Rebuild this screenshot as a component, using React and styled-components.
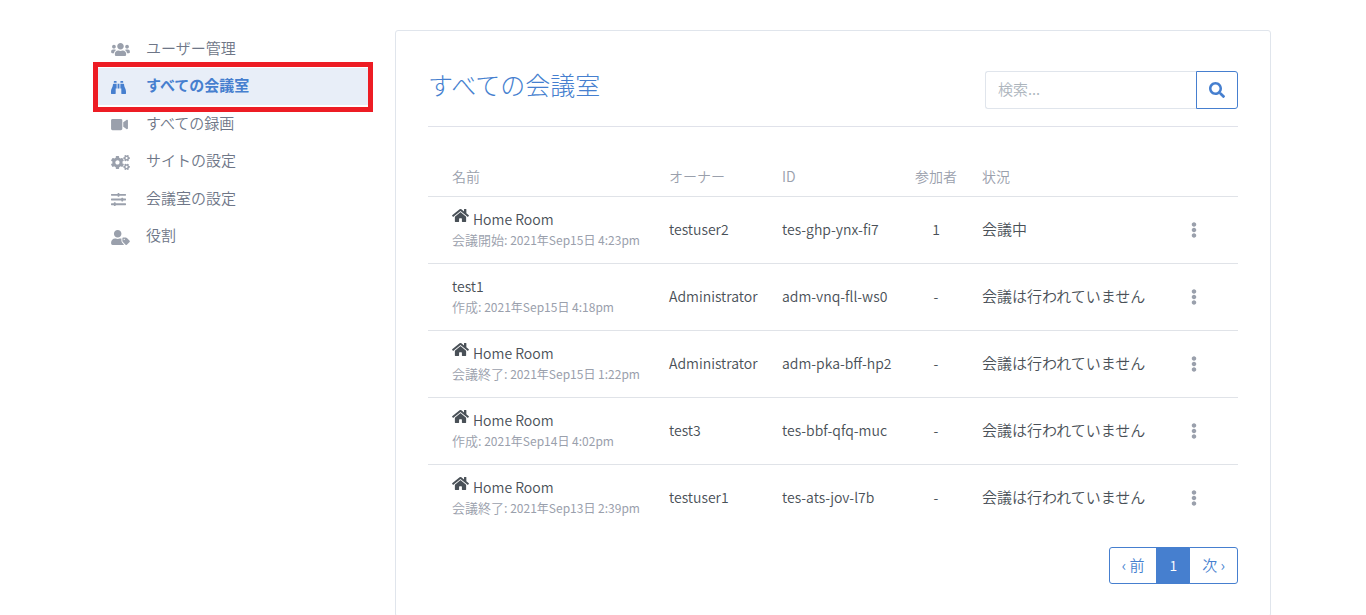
import React from 'react'
import styled, { createGlobalStyle } from 'styled-components';
import {
    FaUsers,
    FaBinoculars,
    FaVideo,
    FaCogs,
    FaSlidersH,
    FaUserTag,
    FaHome,
    FaSearch,
    FaEllipsisV
} from 'react-icons/fa';

const GlobalStyle = createGlobalStyle`
    * {
        box-sizing: border-box;
    }

    body {
        margin: 0;
        background: #fff;
        color: #495057;
        font-family: "Noto Sans CJK JP", "Noto Sans", sans-serif;
        font-size: 15px;
        font-weight: 350;
        line-height: 24px;
    }
`;

const Container = styled.div`
    display: grid;
    grid-template-columns: minmax(0, 1fr) minmax(0, 3fr);
    max-width: 1200px;
    margin: 0 auto;
    padding-top: 30px;
`;

const Sidebar = styled.nav`
    padding: 0 12px;
`;

const MenuList = styled.ul`
    display: grid;
    grid-auto-rows: 1fr;
    height: 225px;
    margin: 0;
    padding: 0;
    list-style: none;
`;

const MenuItem = styled.li`
    display: flex;
    position: relative;

    ${({ $active }) => $active && `
        &::after {
            content: "";
            position: absolute;
            inset: -6px -2px -7px;
            border: 5px solid #ed1c24;
            pointer-events: none;
        }
    `}
`;

const MenuLink = styled.a`
    flex: 1;
    display: flex;
    align-items: center;
    padding: 0 16px 2px;
    color: ${({ $active }) => ($active ? '#467fcf' : '#6e7687')};
    background: ${({ $active }) => ($active ? '#e8eef8' : 'transparent')};
    font-weight: ${({ $active }) => ($active ? 700 : 350)};
    text-decoration: none;
`;

const MenuIcon = styled.span`
    display: flex;
    width: 35px;
    padding-top: 4px;
    color: ${({ $active }) => ($active ? '#467fcf' : '#9aa0ac')};

    svg {
        width: ${({ $width }) => $width}px;
        height: 15px;
    }
`;

const Content = styled.main`
    padding: 0 12px;
`;

const Card = styled.section`
    padding: 32px;
    border: 1px solid #e0e5ec;
    border-radius: 3px;
`;

const CardHeader = styled.header`
    display: flex;
    justify-content: space-between;
    padding: 8px 0 17px;
    border-bottom: 1px solid #e0e2ea;
`;

const Title = styled.h1`
    margin: 0;
    color: #467fcf;
    font-size: 25px;
    font-weight: 300;
    line-height: 26px;
`;

const SearchForm = styled.form`
    display: flex;
    width: 253px;
    height: 38px;
`;

const SearchInput = styled.input`
    flex: 1;
    min-width: 0;
    padding: 0 12px 2px;
    border: 1px solid #e0e5ec;
    border-right: 0;
    border-radius: 3px 0 0 3px;
    color: #495057;
    font: inherit;

    &::placeholder {
        color: #adb5bd;
        opacity: 1;
    }
`;

const SearchButton = styled.button`
    display: flex;
    align-items: center;
    justify-content: center;
    width: 42px;
    padding: 0;
    border: 1px solid #467fcf;
    border-radius: 0 3px 3px 0;
    background: #fff;
    color: #467fcf;
    font-size: 16px;
    cursor: pointer;
`;

const Table = styled.table`
    width: 100%;
    margin-top: 29px;
    border-collapse: collapse;
    table-layout: fixed;
`;

const Col = styled.col`
    width: ${({ $width }) => $width};
`;

const HeadCell = styled.th`
    height: 40px;
    padding: 0 12px;
    color: #9aa0ac;
    font-size: 14px;
    font-weight: 350;
    text-align: ${({ $align }) => $align || 'left'};
    white-space: nowrap;

    &:first-child {
        padding-left: 24px;
    }
`;

const Row = styled.tr`
    border-top: 1px solid #e0e3e8;
`;

const Cell = styled.td`
    height: 67px;
    padding: 0 12px 1px;
    font-size: ${({ $status }) => ($status ? '15px' : '14px')};
    text-align: ${({ $align }) => $align || 'left'};
    white-space: nowrap;

    &:first-child {
        padding-left: 24px;
    }
`;

const RoomName = styled.div`
    display: flex;
    gap: 4px;
    line-height: 22px;

    svg {
        width: 17px;
        height: 15px;
    }
`;

const RoomInfo = styled.div`
    color: #9aa0ac;
    font-size: 12px;
    font-weight: 400;
    line-height: 20px;
`;

const InfoLabel = styled.span`
    font-size: 13px;
    font-weight: 350;
`;

const MenuButton = styled.button`
    display: inline-flex;
    padding: 4px;
    border: 0;
    background: none;
    color: #9aa0ac;
    font-size: 16px;
    vertical-align: middle;
    cursor: pointer;
`;

const Pagination = styled.nav`
    display: flex;
    justify-content: flex-end;
    margin-top: 16px;
`;

const PageLink = styled.a`
    display: flex;
    align-items: center;
    justify-content: center;
    height: 37px;
    padding: 0 12px 2px;
    border: 1px solid #467fcf;
    color: ${({ $current }) => ($current ? '#fff' : '#467fcf')};
    background: ${({ $current }) => ($current ? '#467fcf' : '#fff')};
    font-size: ${({ $current }) => ($current ? '14px' : '15px')};
    text-decoration: none;

    & + & {
        margin-left: -1px;
    }

    &:first-child {
        border-radius: 3px 0 0 3px;
    }

    &:last-child {
        border-radius: 0 3px 3px 0;
    }
`;

const menu = [
    { label: 'ユーザー管理', icon: FaUsers, width: 19 },
    { label: 'すべての会議室', icon: FaBinoculars, width: 15, active: true },
    { label: 'すべての録画', icon: FaVideo, width: 17 },
    { label: 'サイトの設定', icon: FaCogs, width: 19 },
    { label: '会議室の設定', icon: FaSlidersH, width: 15 },
    { label: '役割', icon: FaUserTag, width: 19 }
];

const rooms = [
    { name: 'Home Room', home: true, event: '会議開始:', date: '2021年Sep15日 4:23pm', owner: 'testuser2', id: 'tes-ghp-ynx-fi7', users: '1', status: '会議中' },
    { name: 'test1', event: '作成:', date: '2021年Sep15日 4:18pm', owner: 'Administrator', id: 'adm-vnq-fll-ws0', users: '-', status: '会議は行われていません' },
    { name: 'Home Room', home: true, event: '会議終了:', date: '2021年Sep15日 1:22pm', owner: 'Administrator', id: 'adm-pka-bff-hp2', users: '-', status: '会議は行われていません' },
    { name: 'Home Room', home: true, event: '作成:', date: '2021年Sep14日 4:02pm', owner: 'test3', id: 'tes-bbf-qfq-muc', users: '-', status: '会議は行われていません' },
    { name: 'Home Room', home: true, event: '会議終了:', date: '2021年Sep13日 2:39pm', owner: 'testuser1', id: 'tes-ats-jov-l7b', users: '-', status: '会議は行われていません' }
];

const SideMenu = () => (
    <Sidebar>
        <MenuList>
            {menu.map(({ label, icon: Icon, width, active }) => (
                <MenuItem key={label} $active={active}>
                    <MenuLink href="#" $active={active} aria-current={active ? 'page' : undefined}>
                        <MenuIcon $active={active} $width={width}><Icon /></MenuIcon>
                        {label}
                    </MenuLink>
                </MenuItem>
            ))}
        </MenuList>
    </Sidebar>
)

const RoomTable = () => (
    <Table>
        <colgroup>
            <Col $width="229px" />
            <Col $width="113px" />
            <Col $width="132px" />
            <Col $width="68px" />
            <Col />
            <Col $width="88px" />
        </colgroup>
        <thead>
            <tr>
                <HeadCell>名前</HeadCell>
                <HeadCell>オーナー</HeadCell>
                <HeadCell>ID</HeadCell>
                <HeadCell $align="center">参加者</HeadCell>
                <HeadCell>状況</HeadCell>
                <HeadCell />
            </tr>
        </thead>
        <tbody>
            {rooms.map((room) => (
                <Row key={room.id}>
                    <Cell>
                        <RoomName>
                            {room.home && <FaHome />}
                            {room.name}
                        </RoomName>
                        <RoomInfo><InfoLabel>{room.event}</InfoLabel> {room.date}</RoomInfo>
                    </Cell>
                    <Cell>{room.owner}</Cell>
                    <Cell>{room.id}</Cell>
                    <Cell $align="center">{room.users}</Cell>
                    <Cell $status>{room.status}</Cell>
                    <Cell $align="center">
                        <MenuButton type="button" aria-label="メニュー"><FaEllipsisV /></MenuButton>
                    </Cell>
                </Row>
            ))}
        </tbody>
    </Table>
)

export default function App() {
    return (
        <>
            <GlobalStyle />
            <Container>
                <SideMenu />
                <Content>
                    <Card>
                        <CardHeader>
                            <Title>すべての会議室</Title>
                            <SearchForm role="search">
                                <SearchInput type="search" placeholder="検索..." aria-label="検索" />
                                <SearchButton type="button" aria-label="検索"><FaSearch /></SearchButton>
                            </SearchForm>
                        </CardHeader>
                        <RoomTable />
                        <Pagination>
                            <PageLink href="#">‹ 前</PageLink>
                            <PageLink href="#" $current aria-current="page">1</PageLink>
                            <PageLink href="#">次 ›</PageLink>
                        </Pagination>
                    </Card>
                </Content>
            </Container>
        </>
    )
}
